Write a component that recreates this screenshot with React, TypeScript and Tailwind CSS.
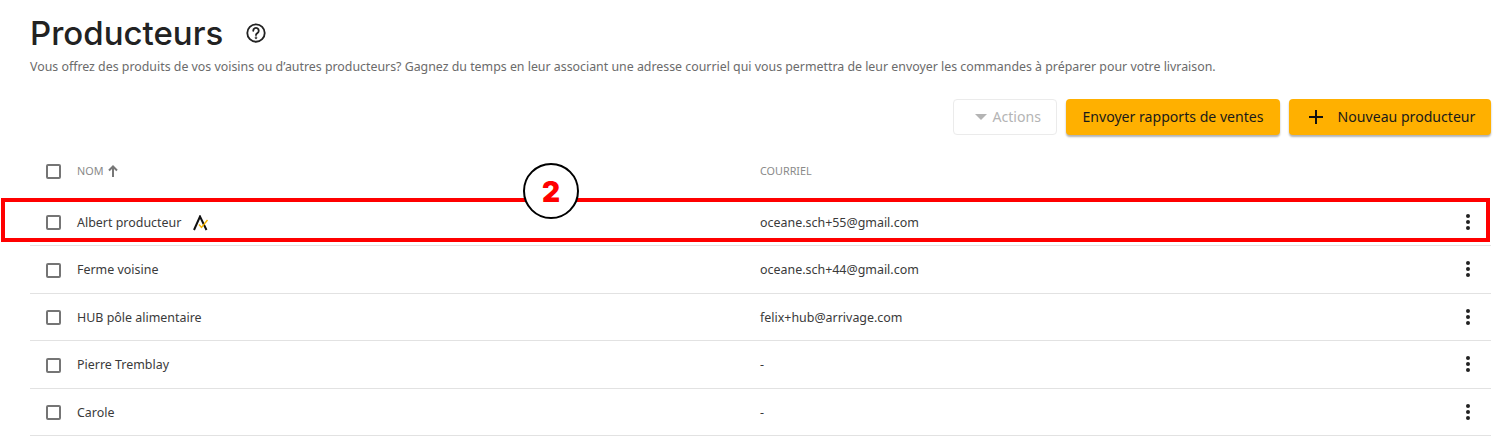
const body = { fontFamily: '"Noto Sans", sans-serif' };

function Box() {
  return <span className="block w-[15px] h-[15px] border-2 border-[#757575] rounded-[2px] bg-white shrink-0" />;
}

function Dots() {
  return (
    <span className="flex flex-col gap-[2px] items-center w-[6px]">
      <span className="w-[4px] h-[4px] rounded-full bg-[#222]" />
      <span className="w-[4px] h-[4px] rounded-full bg-[#222]" />
      <span className="w-[4px] h-[4px] rounded-full bg-[#222]" />
    </span>
  );
}

function Logo() {
  return (
    <svg width="16" height="16" viewBox="0 0 16 16" className="ml-[12px]">
      <path d="M1 15 L7 1.5 L13.5 15" fill="none" stroke="#111" strokeWidth="2" />
      <path d="M6 9.5 L8.5 12.5 L14.5 5" fill="none" stroke="#f5b400" strokeWidth="1.4" />
    </svg>
  );
}

function Row({ name, mail, logo }: { name: string; mail: string; logo?: boolean }) {
  return (
    <div className="flex items-center h-[47.5px] border-b border-[#e2e2e2] text-[12.45px] text-[#3a3a3a] pr-[20px]">
      <div className="w-[47px] pl-[16px] flex items-center pt-[2px]"><Box /></div>
      <div className="w-[683px] flex items-center pt-[3px]">
        <span>{name}</span>
        {logo && <Logo />}
      </div>
      <div className="flex-1 pt-[3px]">{mail}</div>
      <Dots />
    </div>
  );
}

export default function App() {
  return (
    <div className="relative w-[1500px] h-[441px] overflow-hidden bg-white pl-[30px] pr-[9px] pt-[13px]" style={body}>
      <div className="flex items-center h-[40px]">
        <h1 className="text-[33px] leading-[40px] font-medium text-[#222]" style={{ fontFamily: 'Inter, sans-serif' }}>Producteurs</h1>
        <svg width="22" height="22" viewBox="0 0 24 24" fill="none" stroke="#222" strokeWidth="2" strokeLinecap="round" className="ml-[22px]">
          <circle cx="12" cy="12" r="9.5" />
          <path d="M9 9.5a3 3 0 1 1 4.5 2.6c-1 .6-1.5 1.1-1.5 2.2" />
          <circle cx="12" cy="17.3" r="0.4" fill="#222" />
        </svg>
      </div>
      <p className="mt-[5px] text-[12.37px] leading-[18px] text-[#6b6b6b] whitespace-nowrap">
        Vous offrez des produits de vos voisins ou d’autres producteurs? Gagnez du temps en leur associant une adresse courriel qui vous permettra de leur envoyer les commandes à préparer pour votre livraison.
      </p>
      <div className="flex justify-end gap-[9px] mt-[23px] h-[36px] text-[14.1px]">
        <div className="w-[104px] flex items-center justify-end pr-[15px] gap-[6px] border border-[#ebebeb] rounded-[4px] text-[#b4b4b4]">
          <span className="w-0 h-0 border-x-[6px] border-x-transparent border-t-[6px] border-t-[#b4b4b4]" />
          Actions
        </div>
        <div className="w-[214px] flex items-center justify-center bg-[#ffb000] rounded-[4px] shadow-[0_2px_2px_rgba(0,0,0,0.3)] text-[#1a1a1a]">Envoyer rapports de ventes</div>
        <div className="w-[202px] flex items-center justify-center gap-[15px] pl-[4px] bg-[#ffb000] rounded-[4px] shadow-[0_2px_2px_rgba(0,0,0,0.3)] text-[#1a1a1a]">
          <svg width="14" height="14" viewBox="0 0 14 14" stroke="#111" strokeWidth="2"><path d="M7 0v14M0 7h14" /></svg>
          Nouveau producteur
        </div>
      </div>
      <div className="flex items-center h-[47px] mt-[13px] text-[10.8px] text-[#8a8a8a]">
        <div className="w-[47px] pl-[16px]"><Box /></div>
        <div className="w-[683px] flex items-center gap-[6px]">
          NOM
          <svg width="10" height="12" viewBox="0 0 10 12" fill="none" stroke="#777" strokeWidth="2" className="-ml-[1px] -mt-[2px]"><path d="M5 12V2M1 5.5 5 1.5 9 5.5" /></svg>
        </div>
        <div>COURRIEL</div>
      </div>
      <div className="pt-[3.5px]">
        <Row name="Albert producteur" mail="oceane.sch+55@gmail.com" logo />
        <Row name="Ferme voisine" mail="oceane.sch+44@gmail.com" />
        <Row name="HUB pôle alimentaire" mail="felix+hub@arrivage.com" />
        <Row name="Pierre Tremblay" mail="-" />
        <Row name="Carole" mail="-" />
      </div>
      <div className="absolute left-[1px] top-[198px] w-[1489px] h-[44px] border-[4px] border-[#ff0000]" />
      <div className="absolute left-[523px] top-[163px] w-[56px] h-[56px] rounded-full border-2 border-black bg-white flex items-center justify-center pt-[2px] text-[28px] font-black text-[#ff0000]" style={{ fontFamily: 'Inter, sans-serif' }}>2</div>
    </div>
  );
}
